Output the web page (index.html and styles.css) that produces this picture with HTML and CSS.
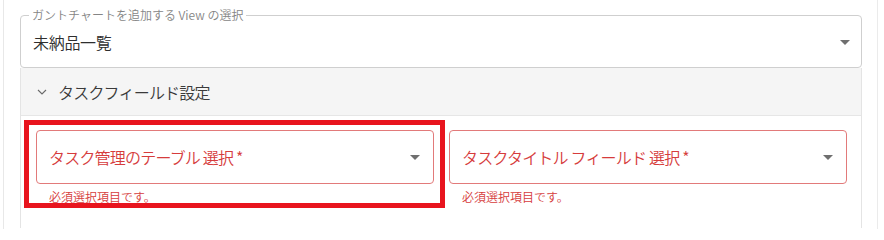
FILE: index.html
```html
<!DOCTYPE html>
<html lang="ja">
<head>
<meta charset="utf-8">
<link rel="stylesheet" href="styles.css">
</head>
<body>
<div class="frame">
  <fieldset class="view-select">
    <legend class="view-label">ガントチャートを追加する View の選択</legend>
    <div class="view-row">
      <span class="view-value">未納品一覧</span>
      <svg class="drop" viewBox="0 0 24 24" width="24" height="24"><path d="M7 10l5 5 5-5z"/></svg>
    </div>
  </fieldset>
  <div class="accordion">
    <div class="acc-head">
      <svg class="chev" viewBox="0 0 10 6" width="10" height="6"><polyline points="1,1 5,5 9,1"/></svg>
      <span class="acc-title">タスクフィールド設定</span>
    </div>
    <div class="acc-body">
      <div class="field">
        <div class="err-select">
          <span class="err-label">タスク管理のテーブル 選択 *</span>
          <svg class="drop" viewBox="0 0 24 24" width="24" height="24"><path d="M7 10l5 5 5-5z"/></svg>
        </div>
        <div class="helper">必須選択項目です。</div>
      </div>
      <div class="field">
        <div class="err-select">
          <span class="err-label">タスクタイトル フィールド 選択 *</span>
          <svg class="drop" viewBox="0 0 24 24" width="24" height="24"><path d="M7 10l5 5 5-5z"/></svg>
        </div>
        <div class="helper">必須選択項目です。</div>
      </div>
      <div class="highlight"></div>
    </div>
  </div>
</div>
</body>
</html>
```
FILE: styles.css
```css
html, body {
  margin: 0;
  padding: 0;
  background: #ffffff;
}
body {
  font-family: "Noto Sans CJK JP", "Noto Sans", sans-serif;
  font-weight: 350;
  color: #333333;
  overflow: hidden;
}
.frame {
  margin-left: 3px;
  width: 842px;
  height: 221px;
  padding: 8px 15px 0 16px;
  border-left: 1px solid #e8e8e8;
  border-right: 1px solid #ebebeb;
}
.view-select {
  margin: 0;
  min-width: 0;
  padding: 0 4px 0 8px;
  border: 1px solid #cfcfcf;
  border-radius: 4px;
  height: 60px;
  box-sizing: border-box;
}
.view-label {
  padding: 0 3px;
  font-size: 12px;
  line-height: 14px;
  color: #858585;
}
.view-row {
  display: flex;
  align-items: center;
  justify-content: space-between;
  height: 40px;
}
.view-value {
  margin-left: 4px;
  font-size: 16px;
  line-height: 24px;
  color: #2e2e2e;
  letter-spacing: -0.3px;
}
.drop {
  fill: #6f6f6f;
  flex: none;
}
.accordion {
  border-left: 1px solid #e4e4e4;
  border-right: 1px solid #e4e4e4;
  height: 160px;
}
.acc-head {
  display: flex;
  align-items: center;
  height: 47px;
  padding-left: 16px;
  background: #f5f5f5;
  border-bottom: 1px solid #e6e6e6;
}
.chev {
  fill: none;
  stroke: #6a6a6a;
  stroke-width: 1.1;
  margin-right: 11px;
}
.acc-title {
  font-size: 16px;
  line-height: 24px;
  color: #3a3a3a;
  letter-spacing: -0.8px;
}
.acc-body {
  position: relative;
  display: grid;
  grid-template-columns: 1fr 1fr;
  column-gap: 15px;
  padding: 14px 14px 0 15px;
}
.err-select {
  display: flex;
  align-items: center;
  justify-content: space-between;
  height: 54px;
  box-sizing: border-box;
  padding: 0 6px 0 12px;
  border: 1px solid #e27a7a;
  border-radius: 4px;
}
.err-label {
  font-size: 16px;
  line-height: 24px;
  color: #d63c3c;
  letter-spacing: -0.8px;
}
.helper {
  margin: 3px 0 0 13px;
  font-size: 12px;
  line-height: 20px;
  color: #d63c3c;
}
.highlight {
  position: absolute;
  left: 3px;
  top: 4px;
  width: 411px;
  height: 78px;
  border: 5px solid #e8141e;
  pointer-events: none;
}
```
